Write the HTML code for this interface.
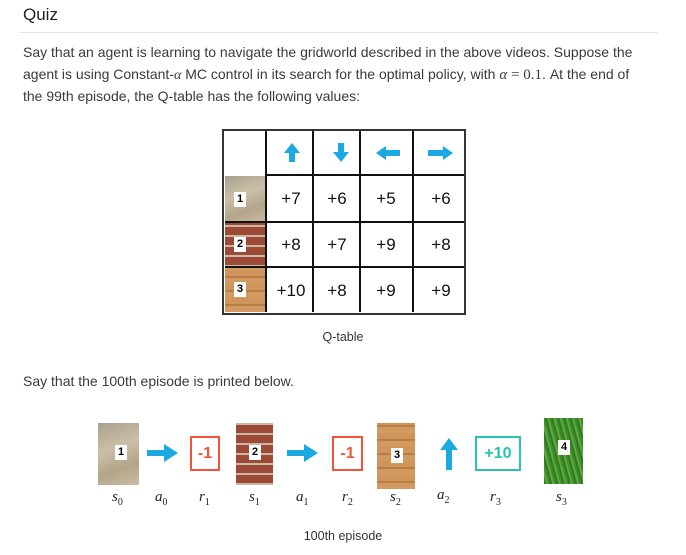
<!DOCTYPE html><html><head><style>
body{margin:0;width:686px;height:555px;background:#fff;font-family:"Liberation Sans",sans-serif;position:relative;overflow:hidden}
.a{position:absolute}
.t{position:absolute;left:23px;font-size:14px;letter-spacing:0;color:#3a3a3a;white-space:nowrap}
.v{position:absolute;font-size:17px;color:#111;text-align:center;width:46px}
.lab{position:absolute;background:#fff;font-weight:bold;font-size:11px;color:#000;width:12px;height:15px;text-align:center;line-height:15px}
.m{position:absolute;font-family:"Liberation Serif",serif;font-style:italic;font-size:15px;color:#222}
.m sub{font-style:normal;font-size:10px}
.box{position:absolute;border:2px solid;font-weight:bold;font-size:16px;text-align:center;box-sizing:border-box;line-height:31px;height:35px}
.stone{background:linear-gradient(160deg,#a9a08c,#cbbfa8 40%,#b3a58a 70%,#c8bca4)}
.brick{background:repeating-linear-gradient(0deg,#c9b8a5 0 2px,#9c4a36 2px 10px)}
.wood{background:repeating-linear-gradient(0deg,#d29a60 0 6px,#b97c44 6px 8px,#cf955a 8px 14px)}
.grass{background:repeating-linear-gradient(75deg,#2f7a22 0 2px,#5ea83c 2px 4px,#3e8e2c 4px 6px)}
.hl{position:absolute;height:2px;background:#111}
.vl{position:absolute;width:2px;background:#111}
</style></head><body>
<div class="a" style="left:23px;top:5px;font-size:17px;color:#222">Quiz</div>
<div class="a" style="left:20px;top:32px;width:638px;height:1px;background:#e4e4e4"></div>
<div class="t" style="top:44px">Say that an agent is learning to navigate the gridworld described in the above videos. Suppose the</div>
<div class="t" style="top:66px">agent is using Constant-<i style="font-family:'Liberation Serif',serif">α</i> MC control in its search for the optimal policy, with <i style="font-family:'Liberation Serif',serif;font-size:15px">α</i> <span style="font-family:'Liberation Serif',serif;font-size:15px">= 0.1</span>. At the end of</div>
<div class="t" style="top:88px">the 99th episode, the Q-table has the following values:</div>

<div class="a" style="left:222px;top:129px;width:240px;height:182px;border:2px solid #333"></div>
<div class="a stone" style="left:225px;top:176px;width:41px;height:46px"></div>
<div class="a brick" style="left:225px;top:222px;width:41px;height:45px"></div>
<div class="a wood" style="left:225px;top:267px;width:41px;height:45px"></div>
<div class="lab" style="left:234px;top:192px">1</div>
<div class="lab" style="left:234px;top:237px">2</div>
<div class="lab" style="left:234px;top:282px">3</div>
<div class="hl" style="left:266px;top:174px;width:198px"></div>
<div class="hl" style="left:225px;top:221px;width:239px"></div>
<div class="hl" style="left:225px;top:266px;width:239px"></div>
<div class="vl" style="left:265px;top:131px;height:181px"></div>
<div class="vl" style="left:312px;top:131px;height:181px"></div>
<div class="vl" style="left:359px;top:131px;height:181px"></div>
<div class="vl" style="left:412px;top:131px;height:181px"></div>
<svg class="a" style="left:266px;top:131px" width="198" height="43">
<path d="M26 12 L34 22 L29 22 L29 31 L23 31 L23 22 L18 22 Z" fill="#1aa9e0"/>
<path d="M72 12 L78 12 L78 21 L83 21 L75 31 L67 21 L72 21 Z" fill="#1aa9e0"/>
<path d="M110 22 L120 15 L120 19 L134 19 L134 25 L120 25 L120 29 Z" fill="#1aa9e0"/>
<path d="M187 22 L177 15 L177 19 L162 19 L162 25 L177 25 L177 29 Z" fill="#1aa9e0"/>
</svg>
<div class="v" style="left:268px;top:189px">+7</div><div class="v" style="left:314px;top:189px">+6</div><div class="v" style="left:363px;top:189px">+5</div><div class="v" style="left:418px;top:189px">+6</div>
<div class="v" style="left:268px;top:235px">+8</div><div class="v" style="left:314px;top:235px">+7</div><div class="v" style="left:363px;top:235px">+9</div><div class="v" style="left:418px;top:235px">+8</div>
<div class="v" style="left:268px;top:281px">+10</div><div class="v" style="left:314px;top:281px">+8</div><div class="v" style="left:363px;top:281px">+9</div><div class="v" style="left:418px;top:281px">+9</div>
<div class="a" style="left:0;width:686px;text-align:center;top:330px;font-size:12.5px;color:#333">Q-table</div>

<div class="t" style="top:373px">Say that the 100th episode is printed below.</div>

<div class="a stone" style="left:98px;top:423px;width:41px;height:62px"></div>
<div class="lab" style="left:115px;top:445px">1</div>
<div class="a brick" style="left:236px;top:423px;width:37px;height:62px"></div>
<div class="lab" style="left:249px;top:445px">2</div>
<div class="a wood" style="left:377px;top:423px;width:38px;height:66px"></div>
<div class="lab" style="left:391px;top:448px">3</div>
<div class="a grass" style="left:544px;top:418px;width:39px;height:66px"></div>
<div class="lab" style="left:558px;top:440px">4</div>
<svg class="a" style="left:140px;top:430px" width="330" height="50">
<path d="M7 20 L24 20 L24 14 L38 23 L24 32 L24 26 L7 26 Z" fill="#1aa9e0"/>
<path d="M147 20 L164 20 L164 14 L178 23 L164 32 L164 26 L147 26 Z" fill="#1aa9e0"/>
<path d="M309 8 L318 20 L312 20 L312 40 L306 40 L306 20 L300 20 Z" fill="#1aa9e0"/>
</svg>
<div class="box" style="left:190px;top:436px;width:30px;border-color:#f0553a;color:#f0553a">-1</div>
<div class="box" style="left:332px;top:436px;width:31px;border-color:#f0553a;color:#f0553a">-1</div>
<div class="box" style="left:475px;top:436px;width:46px;border-color:#27c4b0;color:#27c4b0">+10</div>
<div class="m" style="left:112px;top:489px">s<sub>0</sub></div>
<div class="m" style="left:155px;top:489px">a<sub>0</sub></div>
<div class="m" style="left:199px;top:489px">r<sub>1</sub></div>
<div class="m" style="left:249px;top:489px">s<sub>1</sub></div>
<div class="m" style="left:296px;top:489px">a<sub>1</sub></div>
<div class="m" style="left:342px;top:489px">r<sub>2</sub></div>
<div class="m" style="left:390px;top:489px">s<sub>2</sub></div>
<div class="m" style="left:437px;top:487px">a<sub>2</sub></div>
<div class="m" style="left:490px;top:489px">r<sub>3</sub></div>
<div class="m" style="left:556px;top:489px">s<sub>3</sub></div>
<div class="a" style="left:0;width:686px;text-align:center;top:529px;font-size:12.5px;color:#333">100th episode</div>
</body></html>
